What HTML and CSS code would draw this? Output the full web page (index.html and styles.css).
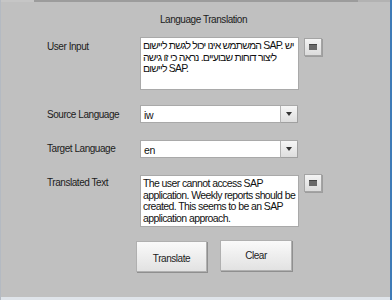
FILE: index.html
```html
<!DOCTYPE html>
<html lang="en">
<head>
  <meta charset="UTF-8" />
  <title>Language Translation</title>
  <link rel="stylesheet" href="styles.css">
</head>
<body>
  <div class="window">
    <div class="top-edge"></div>
    <div class="panel">
      <h1 class="title">Language Translation</h1>

      <div class="form">
        <label class="label label-top">User Input</label>
        <div class="textbox textbox-he">המשתמש אינו יכול לגשת ליישום SAP. יש ליצור דוחות שבועיים. נראה כי זו גישה ליישום SAP.</div>
        <button class="side-btn" type="button"><span class="side-icon"></span></button>

        <label class="label">Source Language</label>
        <div class="select"><span class="select-value">iw</span><span class="select-arrow"></span></div>
        <span></span>

        <label class="label">Target Language</label>
        <div class="select"><span class="select-value">en</span><span class="select-arrow"></span></div>
        <span></span>

        <label class="label label-top">Translated Text</label>
        <div class="textbox textbox-en">The user cannot access SAP application. Weekly reports should be created. This seems to be an SAP application approach.</div>
        <button class="side-btn" type="button"><span class="side-icon"></span></button>
      </div>

      <div class="actions">
        <button class="btn btn-translate" type="button">Translate</button>
        <button class="btn btn-clear" type="button">Clear</button>
      </div>
    </div>
    <div class="bottom-edge"></div>
  </div>
</body>
</html>
```

FILE: styles.css
```css
* {
  margin: 0;
  padding: 0;
  box-sizing: border-box;
}
body {
  font-family: 'Liberation Sans', Arial, sans-serif;
  font-size: 10px;
  letter-spacing: -0.45px;
  color: #1c1c1c;
  background: #c0c0c0;
}
/* Window frame */
.window {
  width: 392px;
  height: 300px;
  display: flex;
  flex-direction: column;
  background: #c0c0c0;
  border-left: 1px solid #b4bac2;
  border-right: 2px solid #3f7cb8;
}
.top-edge {
  height: 2px;
  background: linear-gradient(to right, #c6c6c6 33px, #9c9c9c 33px, #9c9c9c 357px, #b2b2b2 357px);
}
.bottom-edge {
  margin-top: auto;
  height: 3px;
  background: #dfe4ea;
}
/* Panel */
.panel {
  padding: 11px 0 0 46px;
}
.title {
  font-size: 10px;
  font-weight: normal;
  text-align: center;
  margin-left: -46px;
  padding-left: 16px;
  height: 24px;
  line-height: 13px;
}
.form {
  display: grid;
  grid-template-columns: 88px 159px 18px;
  column-gap: 5px;
  row-gap: 15px;
  align-items: center;
}
.label {
  font-size: 10px;
}
.label-top {
  align-self: start;
  padding-top: 4px;
}
.form .select:nth-of-type(3) {
  margin-top: 2px;
}
/* Text boxes */
.textbox {
  height: 53px;
  background: #fff;
  border: 1px solid #a9a9a9;
  padding: 2px 1px 2px 2px;
  font-size: 10.5px;
  letter-spacing: -0.6px;
  line-height: 11.7px;
  color: #111;
  overflow: hidden;
}
.textbox-he {
  letter-spacing: -0.8px;
  padding-right: 0;
}
.textbox-en {
  margin-top: 2px;
  height: 52px;
}
.side-btn {
  align-self: start;
  width: 18px;
  height: 18px;
  margin-top: 1px;
  border: 1px solid #a4a4a4;
  background: linear-gradient(#f4f4f4, #dcdcdc);
  box-shadow: 1px 1px 0 #9d9d9d;
  display: flex;
  align-items: center;
  justify-content: center;
}
.side-icon {
  width: 8px;
  height: 6px;
  background: #6a6a6a;
  border-top: 1px solid #444;
}
/* Select */
.select {
  height: 18px;
  width: 158px;
  display: flex;
  background: #fff;
  border: 1px solid #a9a9a9;
}
.select-value {
  flex: 1;
  padding: 3px 3px 0;
  line-height: 13px;
  font-size: 10.5px;
  color: #111;
}
.select-arrow {
  width: 17px;
  border-left: 1px solid #b4b4b4;
  background: linear-gradient(#f6f6f6, #dedede);
  box-shadow: 1px 1px 0 #a0a0a0;
  display: flex;
  align-items: center;
  justify-content: center;
}
.select-arrow::after {
  content: "";
  border-left: 3.5px solid transparent;
  border-right: 3.5px solid transparent;
  border-top: 4px solid #333;
}
/* Buttons */
.actions {
  display: flex;
  gap: 13px;
  margin-top: 14px;
  padding-left: 89px;
}
.btn {
  width: 71px;
  height: 31px;
  font-family: 'Liberation Sans', Arial, sans-serif;
  font-size: 10px;
  letter-spacing: -0.45px;
  color: #1c1c1c;
  border: 1px solid #b0b0b0;
  background: linear-gradient(#fafafa, #e2e2e2);
  box-shadow: 1px 1px 0 #8f8f8f;
}
.btn-translate {
  padding-top: 4px;
}
.btn-clear {
  width: 72px;
  margin-top: -1px;
}
```
